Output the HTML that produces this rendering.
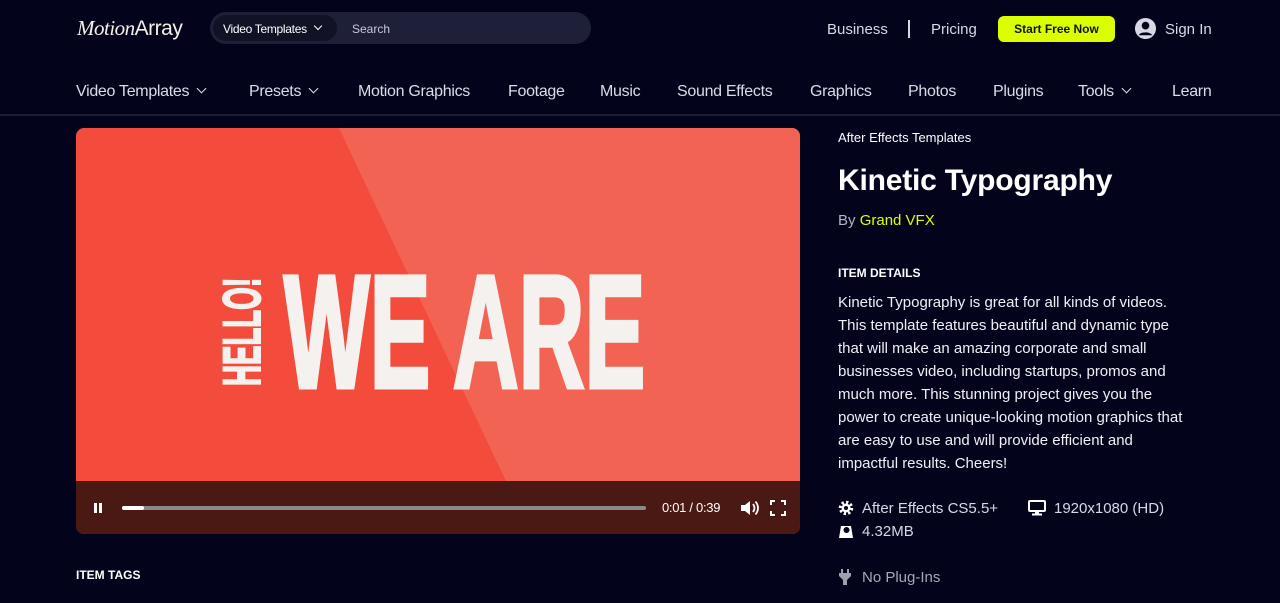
<!DOCTYPE html>
<html><head><meta charset="utf-8"><style>
*{margin:0;padding:0;box-sizing:border-box}
body{width:1280px;height:603px;background:#03031c;font-family:"Liberation Sans",sans-serif;color:#e6e6ee;position:relative;overflow:hidden}
.a{position:absolute;white-space:nowrap}
.nav{top:83px;font-size:16px;color:#dcdce6;letter-spacing:-0.3px}
.chev{display:inline-block;width:7px;height:7px;border-right:1.5px solid #dcdce6;border-bottom:1.5px solid #dcdce6;transform:rotate(45deg);margin-left:9px;position:relative;top:-4px}
.desc{font-size:15px;line-height:23px;color:#f0f0f5;letter-spacing:0}
</style></head><body>
<div class="a" style="left:77px;top:16px;font-size:21px;color:#f4f0e8;letter-spacing:-0.5px"><span style="font-family:'Liberation Serif',serif;font-style:italic">Motion</span>Array</div>
<div class="a" style="left:210px;top:12px;width:381px;height:32px;border-radius:16px;background:#1e1f38"></div>
<div class="a" style="left:213px;top:15px;width:124px;height:26px;border-radius:13px;background:#111226;font-size:12px;color:#fff;padding:7px 0 0 10px;letter-spacing:-0.3px">Video Templates<span class="chev" style="width:6px;height:6px;margin-left:8px;border-color:#fff"></span></div>
<div class="a" style="left:352px;top:22px;font-size:12px;color:#c8c8dc">Search</div>
<div class="a" style="left:827px;top:21px;font-size:15px;color:#d8d8e4">Business</div>
<div class="a" style="left:908px;top:20px;width:2px;height:18px;background:#d8d8e4"></div>
<div class="a" style="left:931px;top:21px;font-size:15px;color:#d8d8e4">Pricing</div>
<div class="a" style="left:998px;top:16px;width:117px;height:26px;border-radius:6px;background:#dcff00;color:#111;font-size:12px;font-weight:bold;text-align:center;line-height:26px">Start Free Now</div>
<svg class="a" style="left:1134px;top:17px" width="23" height="23" viewBox="0 0 24 24"><circle cx="12" cy="12" r="11" fill="#d8d8e4"/><circle cx="12" cy="9" r="4" fill="#03031c"/><path d="M5 19c2-4 12-4 14 0" fill="#03031c"/></svg>
<div class="a" style="left:1165px;top:21px;font-size:15px;color:#d8d8e4">Sign In</div>

<div class="a nav" style="left:76px">Video Templates<span class="chev"></span></div>
<div class="a nav" style="left:249px">Presets<span class="chev"></span></div>
<div class="a nav" style="left:358px">Motion Graphics</div>
<div class="a nav" style="left:508px">Footage</div>
<div class="a nav" style="left:600px">Music</div>
<div class="a nav" style="left:677px">Sound Effects</div>
<div class="a nav" style="left:810px">Graphics</div>
<div class="a nav" style="left:908px">Photos</div>
<div class="a nav" style="left:993px">Plugins</div>
<div class="a nav" style="left:1078px">Tools<span class="chev"></span></div>
<div class="a nav" style="left:1172px">Learn</div>
<div class="a" style="left:0;top:114px;width:1280px;height:2px;background:#1c1c36"></div>

<div class="a" style="left:76px;top:128px;width:724px;height:406px;border-radius:8px;overflow:hidden;background:#f44c3c">
<svg class="a" style="left:0;top:0" width="724" height="406"><polygon points="263,0 724,0 724,406 455,406" fill="#f26354"/></svg>
<div class="a" style="left:208px;top:129px;font-size:160px;font-weight:bold;color:#f4f1ee;-webkit-text-stroke:5px #f4f1ee;transform:scaleX(0.565);transform-origin:0 0;line-height:150px;letter-spacing:1px">WE ARE</div>
<div class="a" style="left:147px;top:258px;font-size:53px;font-weight:bold;color:#f4f1ee;-webkit-text-stroke:2px #f4f1ee;transform:rotate(-90deg) scaleX(0.55);transform-origin:0 0;line-height:40px;width:210px">HELLO!</div>
<div class="a" style="left:0;top:353px;width:724px;height:53px;background:#4a1913"></div>
<div class="a" style="left:18px;top:375px;width:3px;height:10px;background:#fff"></div>
<div class="a" style="left:23px;top:375px;width:3px;height:10px;background:#fff"></div>
<div class="a" style="left:46px;top:378px;width:524px;height:4px;border-radius:2px;background:#8a8a8a"></div>
<div class="a" style="left:46px;top:378px;width:22px;height:4px;border-radius:2px;background:#fff"></div>
<div class="a" style="left:586px;top:372px;font-size:13px;color:#fff;letter-spacing:-0.3px">0:01 / 0:39</div>
<svg class="a" style="left:664px;top:371px" width="20" height="18" viewBox="0 0 20 18"><path d="M1 6h4l5-4v14l-5-4H1z" fill="#fff"/><path d="M13 5q3 4 0 8M15.5 2.5q5 6.5 0 13" stroke="#fff" stroke-width="1.8" fill="none"/></svg>
<svg class="a" style="left:694px;top:372px" width="16" height="16" viewBox="0 0 16 16" fill="none" stroke="#fff" stroke-width="2"><path d="M1 5V1h4M11 1h4v4M15 11v4h-4M5 15H1v-4"/></svg>
</div>

<div class="a" style="left:838px;top:130px;font-size:13px;color:#fff">After Effects Templates</div>
<div class="a" style="left:838px;top:164px;font-size:30px;font-weight:bold;color:#fff;letter-spacing:-0.2px">Kinetic Typography</div>
<div class="a" style="left:838px;top:212px;font-size:15px;color:#b4b4c0">By <span style="color:#dcff00">Grand VFX</span></div>
<div class="a" style="left:838px;top:266px;font-size:12px;font-weight:bold;color:#fff">ITEM DETAILS</div>
<div class="a desc" style="left:838px;top:291px">Kinetic Typography is great for all kinds of videos.<br>This template features beautiful and dynamic type<br>that will make an amazing corporate and small<br>businesses video, including startups, promos and<br>much more. This stunning project gives you the<br>power to create unique-looking motion graphics that<br>are easy to use and will provide efficient and<br>impactful results. Cheers!</div>
<svg class="a" style="left:838px;top:500px" width="16" height="16" viewBox="0 0 16 16"><circle cx="8" cy="8" r="5.5" fill="none" stroke="#fff" stroke-width="3.5" stroke-dasharray="2.2 2.1"/><circle cx="8" cy="8" r="4.5" fill="#fff"/><circle cx="8" cy="8" r="2" fill="#03031c"/></svg>
<div class="a" style="left:862px;top:500px;font-size:15px;color:#d8d8e4">After Effects CS5.5+</div>
<svg class="a" style="left:1028px;top:500px" width="18" height="16" viewBox="0 0 18 16"><rect x="1" y="1" width="16" height="10" rx="1" fill="none" stroke="#fff" stroke-width="2"/><rect x="7" y="11" width="4" height="3" fill="#fff"/><rect x="4" y="13.5" width="10" height="2" fill="#fff"/></svg>
<div class="a" style="left:1054px;top:500px;font-size:15px;color:#d8d8e4">1920x1080 (HD)</div>
<svg class="a" style="left:838px;top:523px" width="16" height="16" viewBox="0 0 16 16"><path d="M3 3h10l2 12H1z" fill="#fff"/><circle cx="8.5" cy="7" r="3" fill="#03031c"/></svg>
<div class="a" style="left:862px;top:523px;font-size:15px;color:#d8d8e4">4.32MB</div>
<svg class="a" style="left:838px;top:569px" width="14" height="16" viewBox="0 0 14 16" fill="#a0a0ac"><rect x="3" y="0" width="2" height="4"/><rect x="9" y="0" width="2" height="4"/><path d="M1 4h12v3l-4 4v5H5v-5L1 7z"/></svg>
<div class="a" style="left:862px;top:569px;font-size:15px;color:#a8a8b4">No Plug-Ins</div>
<div class="a" style="left:76px;top:568px;font-size:12px;font-weight:bold;color:#fff">ITEM TAGS</div>
</body></html>
